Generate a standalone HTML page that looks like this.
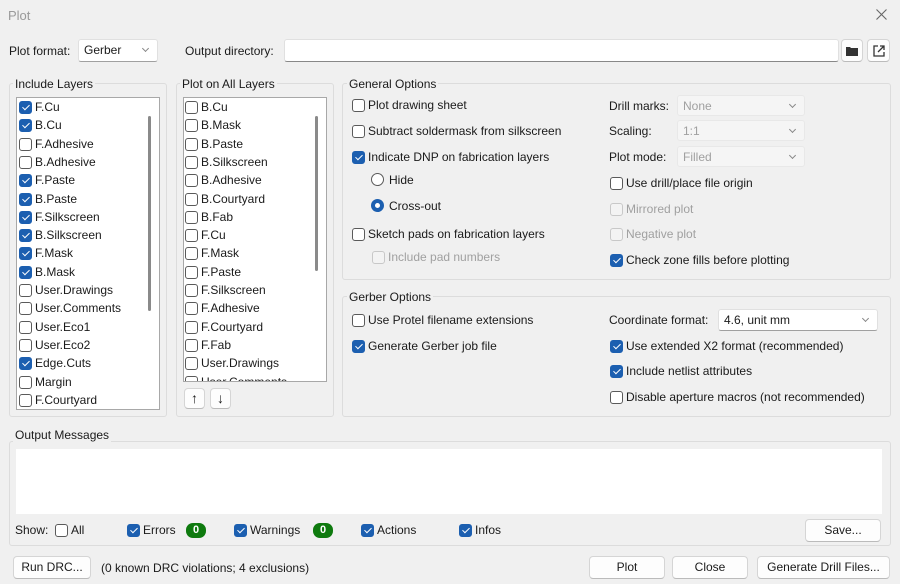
<!DOCTYPE html><html><head><meta charset="utf-8"><style>
*{box-sizing:border-box}
body{margin:0;width:900px;height:584px;background:#f0f0f0;font-family:"Liberation Sans",sans-serif;font-size:12px;color:#1a1a1a;position:relative;overflow:hidden}
.a{position:absolute;white-space:nowrap}
.grp{position:absolute;border:1px solid #dcdcdc;border-radius:3px}
.gt{position:absolute;background:#f0f0f0;padding:0 2px;line-height:14px}
.cb{position:absolute;width:13px;height:13px;border:1px solid #5a5a5a;border-radius:3px;background:#fff}
.cb.on{background:#1c5fb0;border-color:#1c5fb0}
.cb.on::after{content:"";position:absolute;left:3.5px;top:1px;width:3px;height:6px;border:solid #fff;border-width:0 1.4px 1.4px 0;transform:rotate(45deg)}
.cb.dis{border-color:#c8c8c8;background:#f3f3f3}
.lb{position:absolute;line-height:14px;white-space:nowrap}
.dis2{color:#a0a0a0}
.combo{position:absolute;background:#fff;border:1px solid #e0e0e0;border-bottom-color:#a0a0a0;border-radius:3px;line-height:20px;padding-left:5px}
.combo.d{background:#f5f5f5;color:#a0a0a0;border-color:#e8e8e8}
.combo::after{content:"";position:absolute;right:9px;top:6px;width:4px;height:4px;border:solid #888;border-width:0 1px 1px 0;transform:rotate(45deg)}
.btn{position:absolute;background:#fdfdfd;border:1px solid #d5d5d5;border-bottom-color:#bbb;border-radius:4px;text-align:center;line-height:20px}
.list{position:absolute;background:#fff;border:1px solid #a8a8a8;overflow:hidden}
.sb{position:absolute;width:3px;background:#8a8a8a;border-radius:2px}
.badge{position:absolute;width:20px;height:15px;border-radius:7px;background:#0e7a0e;color:#fff;font-weight:bold;font-size:11px;text-align:center;line-height:15px}
.rd{position:absolute;width:13px;height:13px;border-radius:50%;border:1px solid #5a5a5a;background:#fff}
.rd.on{border:4px solid #1c5fb0}
</style></head><body>
<div class="a" style="left:8px;top:8px;color:#9a9a9a;font-size:13px">Plot</div>
<svg class="a" style="left:876px;top:9px" width="11" height="11" viewBox="0 0 11 11" stroke="#666" stroke-width="1.1"><path d="M0.5 0.5l10 10M10.5 0.5l-10 10"/></svg>

<div class="lb" style="left:9px;top:44px">Plot format:</div>
<div class="combo" style="left:78px;top:39px;width:80px;height:23px">Gerber</div>
<div class="lb" style="left:185px;top:44px">Output directory:</div>
<div class="a" style="left:284px;top:39px;width:555px;height:23px;background:#fff;border:1px solid #e0e0e0;border-bottom-color:#888;border-radius:3px"></div>
<div class="btn" style="left:841px;top:39px;width:22px;height:23px"><svg width="12" height="10" style="margin-top:6px" viewBox="0 0 12 10"><path d="M0 1h4l1 1h7v8H0z" fill="#333"/></svg></div>
<div class="btn" style="left:867px;top:39px;width:23px;height:23px"><svg width="12" height="12" style="margin-top:5px" viewBox="0 0 12 12" fill="none" stroke="#333" stroke-width="1.3"><path d="M5 1H1v10h10V7M7 1h4v4M11 1L5 7"/></svg></div>

<div class="grp" style="left:9px;top:83px;width:158px;height:334px"></div>
<div class="gt" style="left:13px;top:77px">Include Layers</div>
<div class="list" id="l1" style="left:16px;top:97px;width:144px;height:313px">
<div class="sb" style="left:131px;top:18px;height:195px"></div>
</div>
<div class="grp" style="left:176px;top:83px;width:158px;height:334px"></div>
<div class="gt" style="left:180px;top:77px">Plot on All Layers</div>
<div class="list" id="l2" style="left:183px;top:97px;width:144px;height:285px">
<div class="sb" style="left:131px;top:18px;height:155px"></div>
</div>
<div class="btn" style="left:184px;top:388px;width:21px;height:21px;font-size:14px;line-height:19px">↑</div>
<div class="btn" style="left:210px;top:388px;width:21px;height:21px;font-size:14px;line-height:19px">↓</div>

<div class="grp" style="left:342px;top:83px;width:549px;height:197px"></div>
<div class="gt" style="left:347px;top:77px">General Options</div>
<div class="grp" style="left:342px;top:296px;width:549px;height:121px"></div>
<div class="gt" style="left:347px;top:290px">Gerber Options</div>

<div class="lb" style="left:609px;top:99px">Drill marks:</div>
<div class="combo d" style="left:677px;top:95px;width:128px;height:21px">None</div>
<div class="lb" style="left:609px;top:124px">Scaling:</div>
<div class="combo d" style="left:677px;top:120px;width:128px;height:21px">1:1</div>
<div class="lb" style="left:609px;top:150px">Plot mode:</div>
<div class="combo d" style="left:677px;top:146px;width:128px;height:21px">Filled</div>
<div class="lb" style="left:609px;top:313px">Coordinate format:</div>
<div class="combo" style="left:718px;top:309px;width:160px;height:22px">4.6, unit mm</div>

<div class="rd" style="left:371px;top:173px"></div><div class="lb" style="left:389px;top:173px">Hide</div>
<div class="rd on" style="left:371px;top:199px"></div><div class="lb" style="left:389px;top:199px">Cross-out</div>

<div class="grp" style="left:9px;top:441px;width:882px;height:105px"></div>
<div class="gt" style="left:13px;top:428px">Output Messages</div>
<div class="a" style="left:16px;top:449px;width:866px;height:65px;background:#fff"></div>
<div class="lb" style="left:15px;top:523px">Show:</div>
<div class="badge" style="left:186px;top:523px">0</div>
<div class="badge" style="left:313px;top:523px">0</div>
<div class="btn" style="left:805px;top:519px;width:76px;height:23px">Save...</div>

<div class="btn" style="left:13px;top:556px;width:78px;height:23px">Run DRC...</div>
<div class="lb" style="left:101px;top:561px">(0 known DRC violations; 4 exclusions)</div>
<div class="btn" style="left:589px;top:556px;width:76px;height:23px">Plot</div>
<div class="btn" style="left:672px;top:556px;width:76px;height:23px">Close</div>
<div class="btn" style="left:757px;top:556px;width:133px;height:23px">Generate Drill Files...</div>

<script>
function cb(x,y,t,s,p){p=p||document.body;var ox=0,oy=0;if(p!==document.body){ox=parseInt(p.style.left)+1;oy=parseInt(p.style.top)+1;}
var c=document.createElement('div');c.className='cb'+(s==1?' on':s==2?' dis':'');c.style.left=(x-ox)+'px';c.style.top=(y-6-oy)+'px';p.appendChild(c);
var l=document.createElement('div');l.className='lb'+(s==2?' dis2':'');l.style.left=(x+16-ox)+'px';l.style.top=(y-7-oy)+'px';l.textContent=t;p.appendChild(l);}
var l1=document.getElementById('l1'),l2=document.getElementById('l2');
var A=[["F.Cu",1],["B.Cu",1],["F.Adhesive",0],["B.Adhesive",0],["F.Paste",1],["B.Paste",1],["F.Silkscreen",1],["B.Silkscreen",1],["F.Mask",1],["B.Mask",1],["User.Drawings",0],["User.Comments",0],["User.Eco1",0],["User.Eco2",0],["Edge.Cuts",1],["Margin",0],["F.Courtyard",0]];
A.forEach(function(r,i){cb(19,107+i*18.3,r[0],r[1],l1)});
var B=["B.Cu","B.Mask","B.Paste","B.Silkscreen","B.Adhesive","B.Courtyard","B.Fab","F.Cu","F.Mask","F.Paste","F.Silkscreen","F.Adhesive","F.Courtyard","F.Fab","User.Drawings","User.Comments"];
B.forEach(function(r,i){cb(185,107+i*18.3,r,0,l2)});
cb(352,105,"Plot drawing sheet",0);cb(352,131,"Subtract soldermask from silkscreen",0);cb(352,157,"Indicate DNP on fabrication layers",1);
cb(352,234,"Sketch pads on fabrication layers",0);cb(372,257,"Include pad numbers",2);
cb(610,183,"Use drill/place file origin",0);cb(610,209,"Mirrored plot",2);cb(610,234,"Negative plot",2);cb(610,260,"Check zone fills before plotting",1);
cb(352,320,"Use Protel filename extensions",0);cb(352,346,"Generate Gerber job file",1);
cb(610,346,"Use extended X2 format (recommended)",1);cb(610,371,"Include netlist attributes",1);cb(610,397,"Disable aperture macros (not recommended)",0);
cb(55,530,"All",0);cb(127,530,"Errors",1);cb(234,530,"Warnings",1);cb(361,530,"Actions",1);cb(459,530,"Infos",1);
</script>
</body></html>
